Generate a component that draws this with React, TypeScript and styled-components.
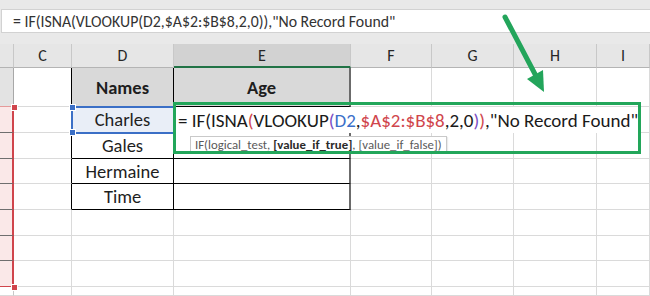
import React from 'react';
import styled, { createGlobalStyle } from 'styled-components';

const FONT = `Carlito, Lato, 'Noto Sans', sans-serif`;

const GlobalStyle = createGlobalStyle`
  html, body {
    margin: 0;
    padding: 0;
    background: #ffffff;
    overflow: hidden;
  }
  * { box-sizing: border-box; }
`;

const Page = styled.div`
  position: relative;
  width: 650px;
  height: 296px;
  overflow: hidden;
  font-family: ${FONT};
  background: #e9e9e9;
`;

const FormulaStrip = styled.div`
  height: 44px;
  padding: 9px 0 11px 1px;
  background: #e9e9e9;
`;

const FormulaBox = styled.div`
  height: 24px;
  background: #ffffff;
  border: 1px solid #d2d2d2;
  border-right: none;
  padding-left: 11px;
  display: flex;
  align-items: center;
  font-size: 15.8px;
  color: #333333;
  white-space: nowrap;
`;

const Sheet = styled.div`
  position: relative;
  display: grid;
  grid-template-columns: 14px 58px 102px 177px 81px 82px 83px 1fr;
  grid-template-rows: 24px 39px 26px 26px 25px 26px 26px 25px 26px 1fr;
  height: 252px;
  background: #ffffff;
`;

interface CellProps {
  $fill?: string;
  $right?: string;
  $bottom?: string;
  $rightWidth?: number;
  $bold?: boolean;
}

const Cell = styled.div<CellProps>`
  display: flex;
  align-items: center;
  justify-content: center;
  background: ${p => p.$fill || '#ffffff'};
  border-right: ${p => p.$rightWidth || 1}px solid ${p => p.$right || '#dadada'};
  border-bottom: 1px solid ${p => p.$bottom || '#dadada'};
  font-size: 18.5px;
  font-weight: ${p => (p.$bold ? 700 : 400)};
  color: #1e1e1e;
  white-space: nowrap;
  overflow: hidden;
`;

const ColHead = styled(Cell)<{ $selected?: boolean }>`
  background: ${p => (p.$selected ? '#d2d2d2' : '#e6e6e6')};
  border-right: 1px solid #c8c8c8;
  border-bottom: ${p => (p.$selected ? '2px solid #217346' : '1px solid #b4b4b4')};
  font-size: 16px;
  color: #262626;
`;

/* row-header selection: red copy-range frame with square grips at both ends */
const RangeGrip = styled.div`
  position: absolute;
  left: 11px;
  top: 60px;
  width: 7px;
  height: 187px;
  z-index: 4;

  &::before,
  &::after {
    content: '';
    position: absolute;
    left: 0;
    width: 5px;
    height: 5px;
    background: #d0454c;
    border: 1px solid #ffffff;
  }
  &::before { top: 0; }
  &::after { bottom: 0; }
`;

/* active-cell frame around D2 with its corner grips */
const SelectionBox = styled.div`
  position: absolute;
  left: 71px;
  top: 62px;
  width: 105px;
  height: 28px;
  border: 2px solid #3b6fc6;
  z-index: 2;

  &::before,
  &::after {
    content: '';
    position: absolute;
    left: -4px;
    width: 5px;
    height: 5px;
    background: #3b6fc6;
    border: 1px solid #ffffff;
  }
  &::before { top: -4px; }
  &::after { bottom: -4px; }
`;

const EditOverlay = styled.div`
  position: absolute;
  left: 174px;
  top: 63px;
  width: 466px;
  display: flex;
  flex-direction: column;
  align-items: flex-start;
  gap: 3px;
  z-index: 3;
`;

const EditLine = styled.div`
  align-self: stretch;
  height: 26px;
  background: #ffffff;
  padding-left: 4px;
  display: flex;
  align-items: center;
  font-size: 19px;
  color: #1a1a1a;
  white-space: nowrap;
`;

const Tok = styled.span<{ $c: string }>`
  color: ${p => p.$c};
`;

const Tip = styled.div`
  margin-left: 16px;
  height: 16px;
  padding: 0 4px;
  background: #ffffff;
  border: 1px solid #c9c9c9;
  box-shadow: 1px 1px 1px rgba(0, 0, 0, 0.08);
  display: flex;
  align-items: center;
  font-size: 12.8px;
  color: #5a5a5a;
  white-space: nowrap;

  b {
    color: #2a2a2a;
    font-weight: 700;
  }
`;

const Highlight = styled.div`
  position: absolute;
  left: 173px;
  top: 58px;
  width: 468px;
  height: 52px;
  border: 3px solid #22a65a;
  z-index: 5;
`;

const Arrow = styled.svg`
  position: absolute;
  left: 0;
  top: 0;
  width: 650px;
  height: 296px;
  pointer-events: none;
  z-index: 6;
`;

const letters = ['C', 'D', 'E', 'F', 'G', 'H', 'I'];
const names = ['Names', 'Charles', 'Gales', 'Hermaine', 'Time', '', '', '', ''];

const RED = '#d0454c';
const PURPLE = '#7a4cc4';
const BLUE = '#3b6fc9';

const App: React.FC = () => {
  const rows = names.map((name, i) => {
    const inTable = i <= 4;
    const pink = i >= 1 && i <= 7;
    let headFill = '#ffffff';
    let headBottom = '#dadada';
    let headRight = '#c8c8c8';
    if (i === 0) {
      headFill = '#e3e3e3';
      headBottom = '#e59a9a';
      headRight = '#a8a8a8';
    } else if (pink) {
      headFill = '#fae8e8';
      headBottom = i === 7 ? RED : '#6e6e6e';
      headRight = RED;
    }
    return (
      <React.Fragment key={i}>
        <Cell $fill={headFill} $bottom={headBottom} $right={headRight} $rightWidth={pink ? 2 : 1} />
        <Cell $right={inTable ? '#000' : undefined} />
        <Cell
          $fill={i === 0 ? '#d9d9d9' : i === 1 ? '#e9eef7' : '#ffffff'}
          $right={inTable ? '#000' : undefined}
          $bottom={inTable ? '#000' : undefined}
          $bold={i === 0}
        >
          {name}
        </Cell>
        <Cell
          $fill={i === 0 ? '#d9d9d9' : '#ffffff'}
          $right={inTable ? '#6b6b6b' : undefined}
          $rightWidth={inTable ? 2 : 1}
          $bottom={inTable ? '#000' : undefined}
          $bold={i === 0}
        >
          {i === 0 ? 'Age' : ''}
        </Cell>
        <Cell />
        <Cell />
        <Cell />
        <Cell />
      </React.Fragment>
    );
  });

  return (
    <Page>
      <GlobalStyle />
      <FormulaStrip>
        <FormulaBox>= IF(ISNA(VLOOKUP(D2,$A$2:$B$8,2,0)),"No Record Found"</FormulaBox>
      </FormulaStrip>
      <Sheet>
        <ColHead />
        {letters.map(l => (
          <ColHead key={l} $selected={l === 'E'}>
            {l}
          </ColHead>
        ))}
        {rows}

        <SelectionBox />
        <RangeGrip />

        <EditOverlay>
          <EditLine>
            = IF(ISNA<Tok $c={RED}>(</Tok>VLOOKUP<Tok $c={PURPLE}>(</Tok>
            <Tok $c={BLUE}>D2</Tok>,<Tok $c={RED}>$A$2:$B$8</Tok>,2,0
            <Tok $c={PURPLE}>)</Tok>
            <Tok $c={RED}>)</Tok>,"No Record Found"
          </EditLine>
          <Tip>
            IF(logical_test,&nbsp;<b>[value_if_true]</b>, [value_if_false])
          </Tip>
        </EditOverlay>
        <Highlight />
      </Sheet>
      <Arrow viewBox="0 0 650 296">
        <line x1="505" y1="17" x2="536" y2="76" stroke="#23a55b" strokeWidth="5" strokeLinecap="round" />
        <polygon points="544,92 543,70 527,79" fill="#23a55b" />
      </Arrow>
    </Page>
  );
};

export default App;
